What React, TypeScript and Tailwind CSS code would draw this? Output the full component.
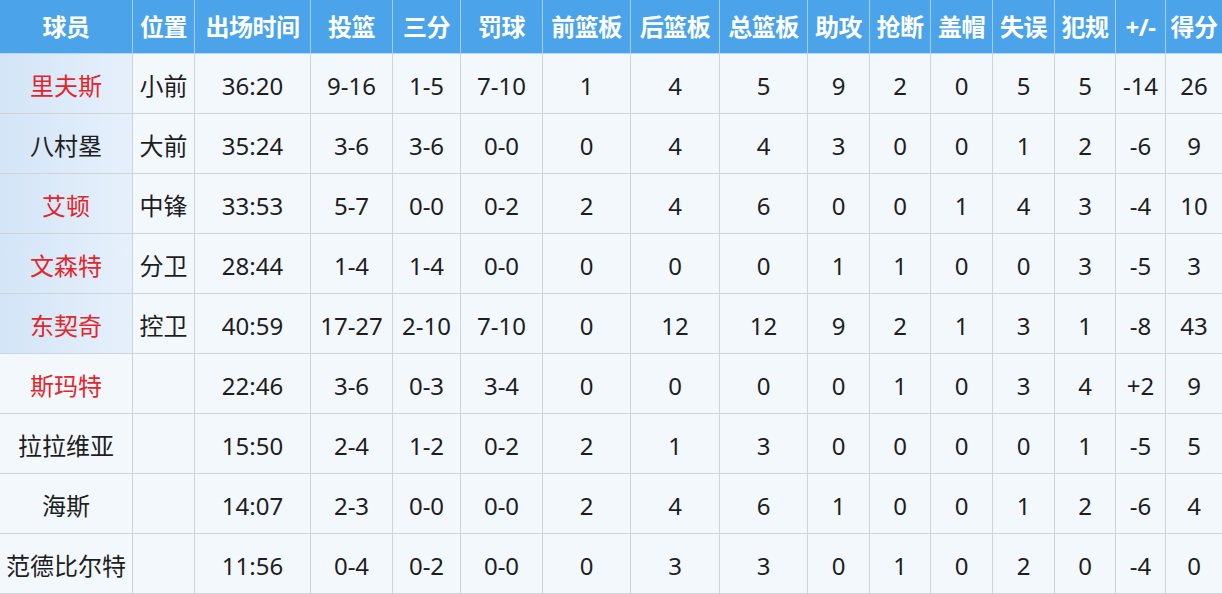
import React from 'react';

const headers = ['球员', '位置', '出场时间', '投篮', '三分', '罚球', '前篮板', '后篮板', '总篮板', '助攻', '抢断', '盖帽', '失误', '犯规', '+/-', '得分'];

type Row = { name: string; starter: boolean; pos: string; stats: string[] };

const rows: Row[] = [
  { name: '里夫斯', starter: true, pos: '小前', stats: ['36:20', '9-16', '1-5', '7-10', '1', '4', '5', '9', '2', '0', '5', '5', '-14', '26'] },
  { name: '八村塁', starter: false, pos: '大前', stats: ['35:24', '3-6', '3-6', '0-0', '0', '4', '4', '3', '0', '0', '1', '2', '-6', '9'] },
  { name: '艾顿', starter: true, pos: '中锋', stats: ['33:53', '5-7', '0-0', '0-2', '2', '4', '6', '0', '0', '1', '4', '3', '-4', '10'] },
  { name: '文森特', starter: true, pos: '分卫', stats: ['28:44', '1-4', '1-4', '0-0', '0', '0', '0', '1', '1', '0', '0', '3', '-5', '3'] },
  { name: '东契奇', starter: true, pos: '控卫', stats: ['40:59', '17-27', '2-10', '7-10', '0', '12', '12', '9', '2', '1', '3', '1', '-8', '43'] },
  { name: '斯玛特', starter: true, pos: '', stats: ['22:46', '3-6', '0-3', '3-4', '0', '0', '0', '0', '1', '0', '3', '4', '+2', '9'] },
  { name: '拉拉维亚', starter: false, pos: '', stats: ['15:50', '2-4', '1-2', '0-2', '2', '1', '3', '0', '0', '0', '0', '1', '-5', '5'] },
  { name: '海斯', starter: false, pos: '', stats: ['14:07', '2-3', '0-0', '0-0', '2', '4', '6', '1', '0', '0', '1', '2', '-6', '4'] },
  { name: '范德比尔特', starter: false, pos: '', stats: ['11:56', '0-4', '0-2', '0-0', '0', '3', '3', '0', '1', '0', '2', '0', '-4', '0'] },
];

const cols =
  'grid grid-cols-[133px_62px_116px_82px_68px_82px_88px_89px_88px_62px_61px_62px_62px_61px_50px_56px]';

export default function App() {
  return (
    <div
      className="w-[1222px] h-[594px] overflow-hidden bg-[#f3f8fd] text-[#1e1e1e]"
      style={{ fontFamily: '"Noto Sans", "Noto Sans CJK SC", sans-serif' }}
    >
      <div className={`${cols} h-[54px] bg-[#4ba4ea] border-b border-[#b9d6ef]`}>
        {headers.map((h, i) => (
          <div
            key={i}
            className={`flex items-center justify-center whitespace-nowrap text-[24px] font-bold text-white tracking-[-0.5px] ${
              i < headers.length - 1 ? 'border-r border-[#a6cdf0]' : ''
            }`}
          >
            {h}
          </div>
        ))}
      </div>
      {rows.map((r, ri) => (
        <div key={ri} className={`${cols} h-[60px] border-b border-[#cfd4d9]`}>
          <div
            className={`flex items-center justify-center pt-[5px] whitespace-nowrap text-[24px] border-r border-[#cfd4d9] ${
              ri < 5 ? 'bg-gradient-to-r from-[#d3e5f7] to-[#e6f0fb]' : ''
            } ${r.starter ? 'text-[#e3262b]' : 'text-[#1e1e1e]'}`}
          >
            {r.name}
          </div>
          <div className="flex items-center justify-center pt-[5px] text-[24px] border-r border-[#cfd4d9]">{r.pos}</div>
          {r.stats.map((s, si) => (
            <div
              key={si}
              className={`flex items-center justify-center pt-[5px] text-[24px] ${
                si < r.stats.length - 1 ? 'border-r border-[#cfd4d9]' : ''
              }`}
            >
              {s}
            </div>
          ))}
        </div>
      ))}
    </div>
  );
}
